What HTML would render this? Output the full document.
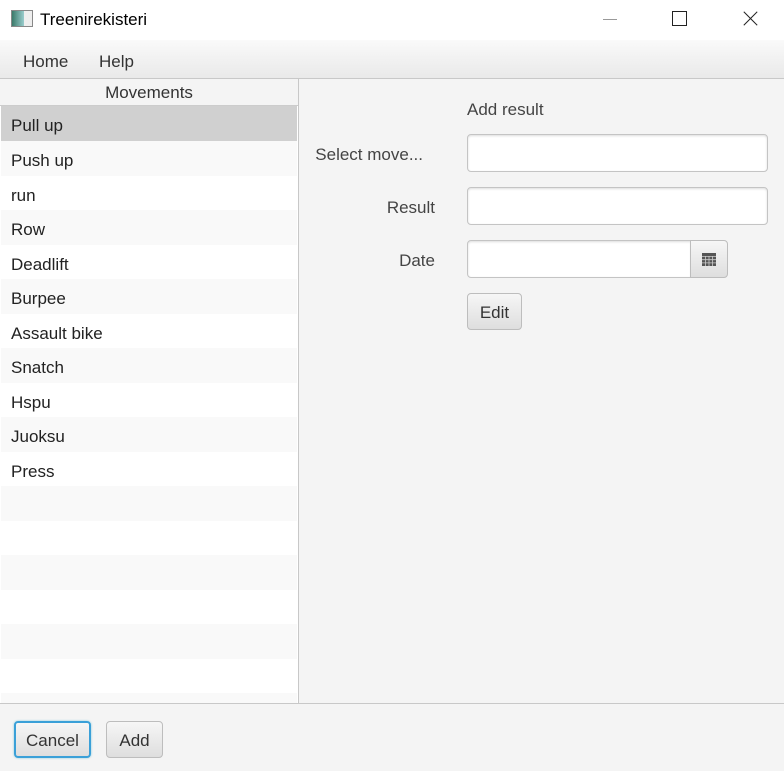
<!DOCTYPE html><html><head><style>
body{margin:0;width:784px;height:771px;background:#f4f4f4;font-family:"Liberation Sans",sans-serif;position:relative;overflow:hidden;color:#333}
.a{position:absolute}
.t{font-size:17px}
.row{position:absolute;left:1px;width:296px;height:34.5px;font-size:17px;line-height:40px;padding-left:10px;box-sizing:border-box;color:#222}
.inp{position:absolute;background:#fff;border:1px solid #c4c4c4;border-radius:4px;box-shadow:inset 0 1px 2px #ddd}
.btn{position:absolute;border:1px solid #bdbdbd;border-radius:4px;background:linear-gradient(#f6f6f6,#dedede);font-size:17px;text-align:center;box-sizing:border-box;color:#333}
.lbl{position:absolute;font-size:17px;text-align:right;width:120px;color:#444}
</style></head><body>
<div class="a" style="left:0;top:0;width:784px;height:40px;background:#fff"></div>
<div class="a" style="left:11px;top:10px;width:20px;height:15px;border:1px solid #888;background:linear-gradient(90deg,#3a7a6a,#9cc 60%,#eee 60%)"></div>
<div class="a t" style="left:40px;top:10px;color:#000">Treenirekisteri</div>
<div class="a" style="left:603px;top:19px;width:14px;height:1px;background:#999"></div>
<div class="a" style="left:672px;top:11px;width:13px;height:13px;border:1px solid #222"></div>
<div class="a" style="left:741px;top:18px;width:19px;height:1px;background:#222;transform:rotate(45deg)"></div>
<div class="a" style="left:741px;top:18px;width:19px;height:1px;background:#222;transform:rotate(-45deg)"></div>
<div class="a" style="left:0;top:40px;width:784px;height:38px;background:linear-gradient(#fafafa,#e9e9e9);border-bottom:1px solid #c8c8c8"></div>
<div class="a t" style="left:23px;top:52px">Home</div>
<div class="a t" style="left:99px;top:52px">Help</div>
<div class="a" style="left:0;top:703px;width:784px;height:1px;background:#c8c8c8"></div>
<div class="a" style="left:0;top:79px;width:298px;height:624px;background:#fff;border-right:1px solid #c8c8c8"></div>
<div class="a" style="left:0;top:79px;width:298px;height:26px;background:#f4f4f4;border-bottom:1px solid #ccc;text-align:center;font-size:17px;line-height:28px">Movements</div>
<div class="row" style="top:106px;background:#d0d0d0">Pull up</div>
<div class="row" style="top:141px;background:#f9f9f9">Push up</div>
<div class="row" style="top:175.5px">run</div>
<div class="row" style="top:210px;background:#f9f9f9">Row</div>
<div class="row" style="top:244.5px">Deadlift</div>
<div class="row" style="top:279px;background:#f9f9f9">Burpee</div>
<div class="row" style="top:313.5px">Assault bike</div>
<div class="row" style="top:348px;background:#f9f9f9">Snatch</div>
<div class="row" style="top:382.5px">Hspu</div>
<div class="row" style="top:417px;background:#f9f9f9">Juoksu</div>
<div class="row" style="top:451.5px">Press</div>
<div class="row" style="top:486px;background:#f9f9f9"></div>
<div class="row" style="top:555px;background:#f9f9f9"></div>
<div class="row" style="top:624px;background:#f9f9f9"></div>
<div class="row" style="top:693px;height:10px;background:#f9f9f9"></div>
<div class="a t" style="left:467px;top:100px;color:#444">Add result</div>
<div class="lbl" style="left:303px;top:145px">Select move...</div>
<div class="inp" style="left:467px;top:134px;width:299px;height:36px"></div>
<div class="lbl" style="left:315px;top:198px">Result</div>
<div class="inp" style="left:467px;top:187px;width:299px;height:36px"></div>
<div class="lbl" style="left:315px;top:251px">Date</div>
<div class="inp" style="left:467px;top:240px;width:223px;height:36px;border-radius:4px 0 0 4px"></div>
<div class="btn" style="left:690px;top:240px;width:38px;height:38px;border-radius:0 4px 4px 0"><svg width="14" height="13" style="margin-top:12px"><rect width="14" height="13" fill="#555"/><g stroke="#ccc" stroke-width="0.8"><path d="M0 3.5H14M0 6.7H14M0 9.9H14M3.5 3V13M7 3V13M10.5 3V13"/></g></svg></div>
<div class="btn" style="left:467px;top:293px;width:55px;height:37px;line-height:37px">Edit</div>
<div class="btn" style="left:14px;top:721px;width:77px;height:37px;line-height:35px;border:2px solid #3aa0d8;box-shadow:0 0 2px #8cd">Cancel</div>
<div class="btn" style="left:106px;top:721px;width:57px;height:37px;line-height:37px">Add</div>
</body></html>
